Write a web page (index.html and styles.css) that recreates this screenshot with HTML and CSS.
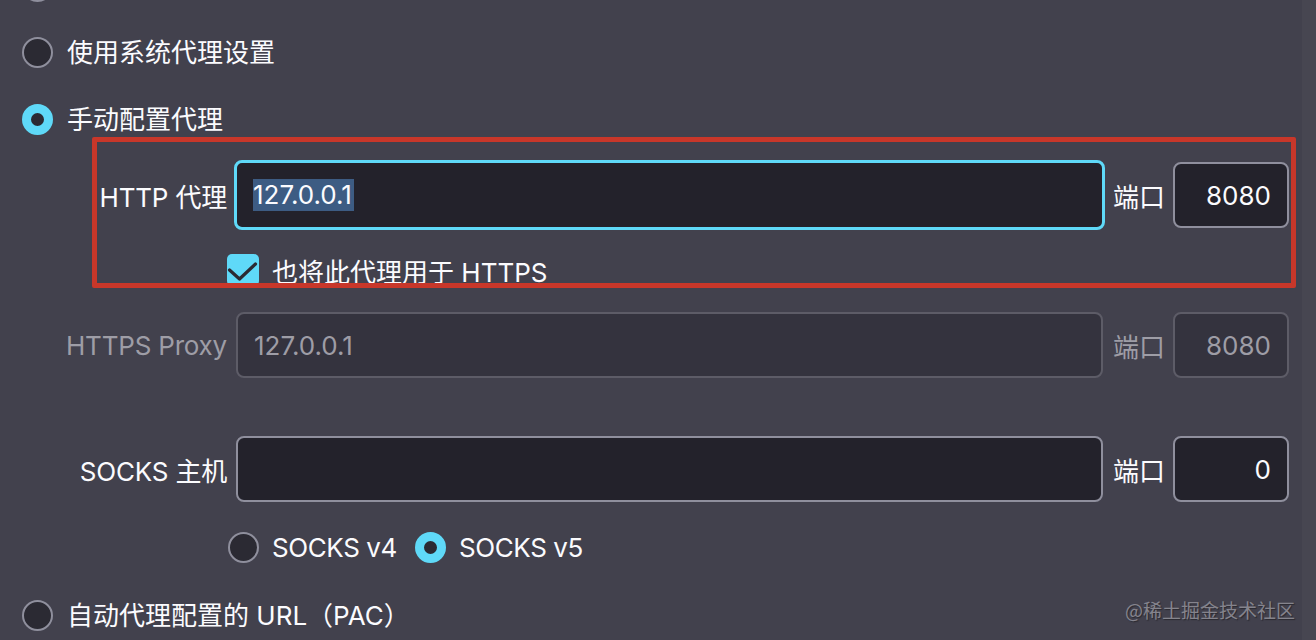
FILE: index.html
```html
<!DOCTYPE html>
<html lang="zh">
<head>
<meta charset="utf-8">
<title>连接设置</title>
<link rel="stylesheet" href="styles.css">
</head>
<body>
<div class="page">
  <div class="radio-row first"><span class="radio"></span></div>
  <div class="radio-row gap1"><span class="radio"></span><span class="rlabel">使用系统代理设置</span></div>
  <div class="radio-row gap2"><span class="radio on"></span><span class="rlabel">手动配置代理</span></div>

  <div class="form">
    <div class="frow r-http">
      <label class="flabel">HTTP 代理</label>
      <div class="field focus"><span class="sel">127.0.0.1</span></div>
      <label class="plabel">端口</label>
      <div class="port">8080</div>
    </div>
    <div class="crow">
      <span class="check"><svg width="32" height="32" viewBox="0 0 32 32"><polyline points="2.5,16 12.5,25 28.5,10" fill="none" stroke="#2b2a33" stroke-width="3.2" stroke-linecap="round" stroke-linejoin="round"/></svg></span>
      <span class="clabel">也将此代理用于 HTTPS</span>
    </div>
    <div class="frow r-https dis">
      <label class="flabel">HTTPS Proxy</label>
      <div class="field"><span>127.0.0.1</span></div>
      <label class="plabel">端口</label>
      <div class="port">8080</div>
    </div>
    <div class="frow r-socks">
      <label class="flabel">SOCKS 主机</label>
      <div class="field"></div>
      <label class="plabel">端口</label>
      <div class="port">0</div>
    </div>
    <div class="vrow">
      <span class="radio"></span><span class="vlabel v4 lat">SOCKS v4</span>
      <span class="radio on"></span><span class="vlabel lat">SOCKS v5</span>
    </div>
  </div>

  <div class="radio-row gap3"><span class="radio"></span><span class="rlabel">自动代理配置的 URL（PAC）</span></div>
</div>
<div class="annot"></div>
<div class="strip"></div>
<div class="watermark">@稀土掘金技术社区</div>
</body>
</html>
```

FILE: styles.css
```css
html, body {
  margin: 0;
  padding: 0;
}
body {
  width: 1316px;
  height: 640px;
  overflow: hidden;
  background: #42414d;
  color: #fbfbfe;
  font-family: Inter, "Noto Sans CJK SC", sans-serif;
  font-size: 26px;
  position: relative;
}
.page {
  padding-left: 22px;
  display: flex;
  flex-direction: column;
}
.radio-row {
  display: flex;
  align-items: center;
  height: 31px;
}
.radio-row.first { margin-top: -29px; }
.radio-row.gap1 { margin-top: 35px; }
.radio-row.gap2 { margin-top: 36px; }
.radio-row.gap3 { margin-top: 37px; }
.radio {
  box-sizing: border-box;
  width: 31px;
  height: 31px;
  border-radius: 50%;
  border: 2px solid #8f8f9d;
  background: #2b2a33;
  flex: none;
}
.radio.on {
  border: 9px solid #5fd9f8;
  background: #2b2a33;
}
.rlabel {
  margin-left: 14px;
  line-height: 31px;
}
.form {
  display: flex;
  flex-direction: column;
  margin-top: 27px;
}
.frow {
  display: flex;
  align-items: center;
  height: 66px;
}
.flabel {
  width: 205px;
  text-align: right;
  flex: none;
  white-space: nowrap;
  letter-spacing: -0.2px;
}
.field {
  box-sizing: border-box;
  margin-left: 9px;
  width: 867px;
  height: 66px;
  border: 2px solid #8f8f9d;
  border-radius: 8px;
  background: #23222b;
  display: flex;
  align-items: center;
  padding-left: 16px;
  flex: none;
}
.field.focus {
  border: 3px solid #5fd9f8;
  width: 871px;
  height: 70px;
  margin-left: 7px;
  margin-right: -2px;
  padding-left: 16px;
}
.sel {
  background: #3d5c83;
  line-height: 32px;
  padding-right: 2px;
}
.plabel {
  margin-left: 10px;
  width: 50px;
  flex: none;
  white-space: nowrap;
}
.port {
  box-sizing: border-box;
  margin-left: 10px;
  width: 116px;
  height: 66px;
  border: 2px solid #8f8f9d;
  border-radius: 8px;
  background: #23222b;
  display: flex;
  align-items: center;
  justify-content: flex-end;
  padding-right: 16px;
  flex: none;
}
.crow {
  display: flex;
  align-items: center;
  margin-top: 26px;
  padding-left: 205px;
  height: 32px;
}
.check {
  width: 32px;
  height: 32px;
  border-radius: 5px;
  background: #5fd9f8;
  display: block;
  flex: none;
}
.check svg { display: block; }
.clabel { margin-left: 13px; }
.r-https { margin-top: 26px; }
.dis { color: #9e9da6; }
.dis .field, .dis .port {
  background: #34333e;
  border-color: #5d5c67;
}
.r-socks { margin-top: 58px; }
.vrow {
  display: flex;
  align-items: center;
  margin-top: 30px;
  padding-left: 206px;
  height: 31px;
}
.vlabel { margin-left: 13px; }
.lat { letter-spacing: -0.4px; }
.vlabel.v4 { margin-right: 18px; }
.annot {
  position: absolute;
  left: 92px;
  top: 137px;
  width: 1194px;
  height: 141px;
  border: 5px solid #c8372a;
  border-radius: 2px;
  pointer-events: none;
}
.strip {
  position: absolute;
  right: 0;
  top: 0;
  width: 14px;
  height: 640px;
  background: #474651;
}
.watermark {
  position: absolute;
  right: 21px;
  top: 596px;
  font-family: "Noto Sans CJK SC", sans-serif;
  font-size: 19px;
  color: #85848d;
  text-shadow: 1px 1px 1px #2a2930;
}
```
